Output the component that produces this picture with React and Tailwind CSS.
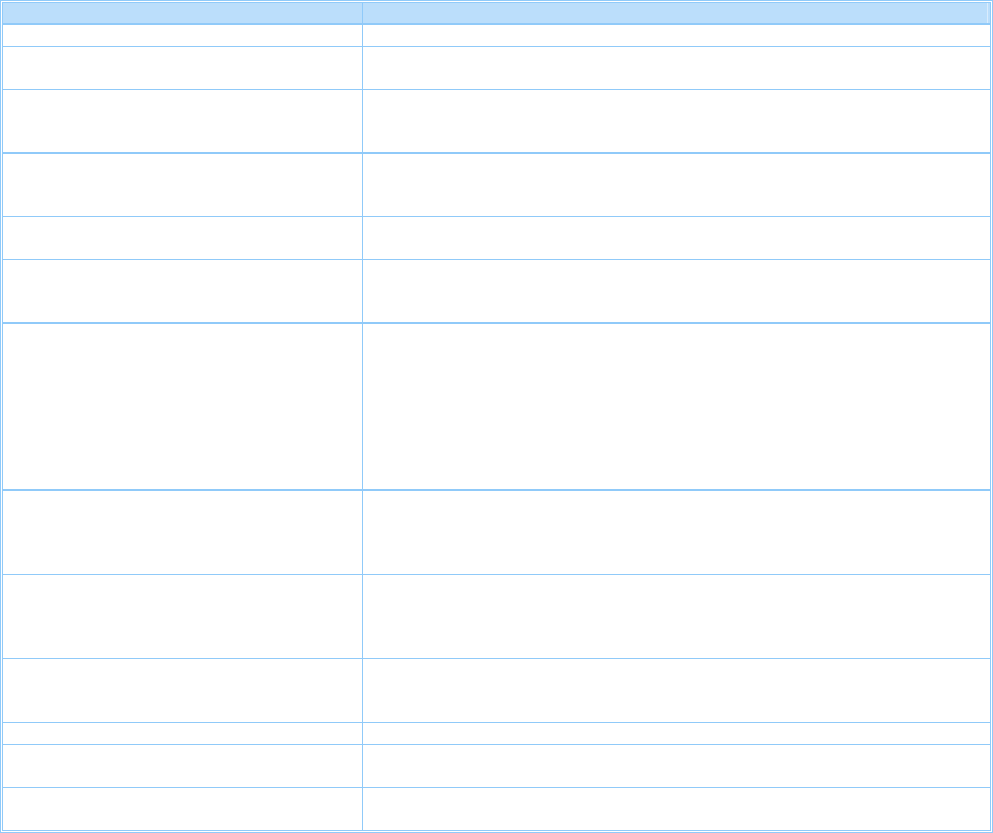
import React from "react";

const rows = [
  { h: "h-[22px]", b: "border-b" },
  { h: "h-[43px]", b: "border-b" },
  { h: "h-[64px]", b: "border-b-2" },
  { h: "h-[63px]", b: "border-b" },
  { h: "h-[43px]", b: "border-b" },
  { h: "h-[64px]", b: "border-b-2" },
  { h: "h-[167px]", b: "border-b-2" },
  { h: "h-[84px]", b: "border-b" },
  { h: "h-[84px]", b: "border-b" },
  { h: "h-[64px]", b: "border-b" },
  { h: "h-[22px]", b: "border-b" },
  { h: "h-[43px]", b: "border-b" },
  { h: "h-[42px]", b: "" },
];

export default function App() {
  return (
    <div className="w-[993px] h-[833px] bg-white" style={{ fontFamily: '"Liberation Sans", Arial, sans-serif' }}>
      <div className="w-full h-full border border-[#90caf9] p-px">
        <div className="w-full h-full border border-[#90caf9] flex flex-col">
          <div className="h-[22px] shrink-0 flex bg-[#bbdefb] border-b-2 border-[#90caf9]">
            <div className="w-[360px] shrink-0 border-r border-[#90caf9]"></div>
            <div className="flex-1 flex justify-end">
              <div className="w-px h-full bg-[#d9ecfd] mr-[2px]"></div>
            </div>
          </div>
          {rows.map((r, i) => (
            <div key={i} className={`${r.h} ${r.b} shrink-0 flex border-[#90caf9]`}>
              <div className="w-[360px] shrink-0 border-r border-[#90caf9]"></div>
              <div className="flex-1"></div>
            </div>
          ))}
        </div>
      </div>
    </div>
  );
}
